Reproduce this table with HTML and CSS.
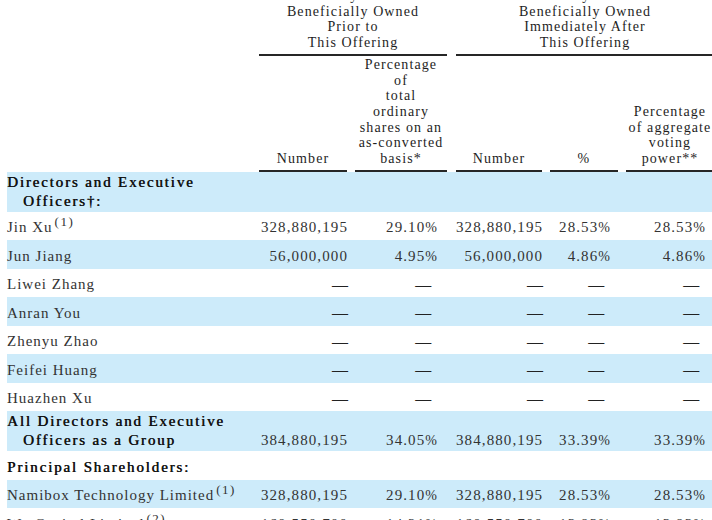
FILE: index.html
```html
<!DOCTYPE html>
<html lang="en">
<head>
<meta charset="utf-8">
<title>Beneficial Ownership</title>
<link rel="stylesheet" href="styles.css">
</head>
<body>
<div class="sheet">
  <div class="row grp">
    <div class="blank"></div>
    <div class="g1"><div class="hd">Ordinary Shares<br>Beneficially Owned<br>Prior to<br>This Offering</div></div>
    <div class="g2"><div class="hd">Ordinary Shares<br>Beneficially Owned<br>Immediately After<br>This Offering</div></div>
  </div>
  <div class="row sub">
    <div class="blank"></div>
    <div class="c c1"><div class="hd">Number</div></div>
    <div class="c c2"><div class="hd">Percentage<br>of<br>total<br>ordinary<br>shares on an<br>as-converted<br>basis*</div></div>
    <div class="c c3"><div class="hd">Number</div></div>
    <div class="c c4"><div class="hd">%</div></div>
    <div class="c c5"><div class="hd">Percentage<br>of aggregate<br>voting<br>power**</div></div>
  </div>

  <div class="row br tall blue">
    <div class="name hang strong">Directors and Executive<br>Officers†:</div>
  </div>
  <div class="row br">
    <div class="name">Jin Xu<sup class="fn">(1)</sup></div>
    <div class="num n1">328,880,195</div>
    <div class="pct p2">29.10<span class="pc">%</span></div>
    <div class="num n3">328,880,195</div>
    <div class="pct p4">28.53<span class="pc">%</span></div>
    <div class="pct p5">28.53<span class="pc">%</span></div>
  </div>
  <div class="row br blue">
    <div class="name">Jun Jiang</div>
    <div class="num n1">56,000,000</div>
    <div class="pct p2">4.95<span class="pc">%</span></div>
    <div class="num n3">56,000,000</div>
    <div class="pct p4">4.86<span class="pc">%</span></div>
    <div class="pct p5">4.86<span class="pc">%</span></div>
  </div>
  <div class="row br">
    <div class="name">Liwei Zhang</div>
    <div class="num n1"><span class="dash">—</span></div>
    <div class="pct p2"><span class="dash">—</span><span class="pc sp"></span></div>
    <div class="num n3"><span class="dash">—</span></div>
    <div class="pct p4"><span class="dash">—</span><span class="pc sp"></span></div>
    <div class="pct p5"><span class="dash">—</span><span class="pc sp"></span></div>
  </div>
  <div class="row br blue">
    <div class="name">Anran You</div>
    <div class="num n1"><span class="dash">—</span></div>
    <div class="pct p2"><span class="dash">—</span><span class="pc sp"></span></div>
    <div class="num n3"><span class="dash">—</span></div>
    <div class="pct p4"><span class="dash">—</span><span class="pc sp"></span></div>
    <div class="pct p5"><span class="dash">—</span><span class="pc sp"></span></div>
  </div>
  <div class="row br">
    <div class="name">Zhenyu Zhao</div>
    <div class="num n1"><span class="dash">—</span></div>
    <div class="pct p2"><span class="dash">—</span><span class="pc sp"></span></div>
    <div class="num n3"><span class="dash">—</span></div>
    <div class="pct p4"><span class="dash">—</span><span class="pc sp"></span></div>
    <div class="pct p5"><span class="dash">—</span><span class="pc sp"></span></div>
  </div>
  <div class="row br blue">
    <div class="name">Feifei Huang</div>
    <div class="num n1"><span class="dash">—</span></div>
    <div class="pct p2"><span class="dash">—</span><span class="pc sp"></span></div>
    <div class="num n3"><span class="dash">—</span></div>
    <div class="pct p4"><span class="dash">—</span><span class="pc sp"></span></div>
    <div class="pct p5"><span class="dash">—</span><span class="pc sp"></span></div>
  </div>
  <div class="row br">
    <div class="name">Huazhen Xu</div>
    <div class="num n1"><span class="dash">—</span></div>
    <div class="pct p2"><span class="dash">—</span><span class="pc sp"></span></div>
    <div class="num n3"><span class="dash">—</span></div>
    <div class="pct p4"><span class="dash">—</span><span class="pc sp"></span></div>
    <div class="pct p5"><span class="dash">—</span><span class="pc sp"></span></div>
  </div>
  <div class="row br tall blue">
    <div class="name hang strong">All Directors and Executive<br>Officers as a Group</div>
    <div class="num n1 lower">384,880,195</div>
    <div class="pct p2 lower">34.05<span class="pc">%</span></div>
    <div class="num n3 lower">384,880,195</div>
    <div class="pct p4 lower">33.39<span class="pc">%</span></div>
    <div class="pct p5 lower">33.39<span class="pc">%</span></div>
  </div>
  <div class="row br">
    <div class="name strong">Principal Shareholders:</div>
  </div>
  <div class="row br blue">
    <div class="name">Namibox Technology Limited<sup class="fn">(1)</sup></div>
    <div class="num n1">328,880,195</div>
    <div class="pct p2">29.10<span class="pc">%</span></div>
    <div class="num n3">328,880,195</div>
    <div class="pct p4">28.53<span class="pc">%</span></div>
    <div class="pct p5">28.53<span class="pc">%</span></div>
  </div>
  <div class="row br">
    <div class="name">Wu Capital Limited<sup class="fn">(2)</sup></div>
    <div class="num n1">160,550,700</div>
    <div class="pct p2">14.21<span class="pc">%</span></div>
    <div class="num n3">160,550,700</div>
    <div class="pct p4">13.93<span class="pc">%</span></div>
    <div class="pct p5">13.93<span class="pc">%</span></div>
  </div>
</div>
</body>
</html>
```

FILE: styles.css
```css
html, body {
  margin: 0;
  padding: 0;
  background: #ffffff;
}

body {
  width: 712px;
  height: 520px;
  overflow: hidden;
  font-family: "Liberation Serif", "Noto Sans CJK SC", serif;
  color: #262626;
}

.sheet {
  margin: -12px 0 0 7px;
  width: 715px;
}

.row {
  display: grid;
  grid-template-columns: 252px 96px 101px 94px 76px 96px;
}

/* ---------- header ---------- */
.grp,
.sub {
  font-size: 14px;
  letter-spacing: 1.1px;
  line-height: 15.7px;
  align-items: end;
  color: #1e1e1e;
}

.grp .g1 {
  grid-column: 2 / 4;
  padding-right: 9px;
}

.grp .g2 {
  grid-column: 4 / 7;
  padding-right: 8px;
}

.hd {
  text-align: center;
  white-space: nowrap;
  border-bottom: 2px solid #262626;
  padding-bottom: 3px;
}

.sub .c {
  padding-right: 8px;
}

.sub .c2 {
  padding-right: 9px;
}

.sub .c2 .hd {
  padding-top: 1px;
}

/* ---------- body rows ---------- */
.br {
  height: 28.5px;
  box-sizing: border-box;
  padding-top: 4px;
  align-items: center;
  font-size: 15px;
  letter-spacing: 1px;
  line-height: 19px;
  color: #333333;
}

.br.tall {
  height: 40px;
  padding-top: 0;
}

.blue {
  background: #cdebfa;
}

.name {
  white-space: nowrap;
}

.hang {
  padding-left: 16px;
  text-indent: -16px;
}

.name.strong {
  color: #111111;
  letter-spacing: 1.85px;
  text-shadow: 0.5px 0 0 #111111;
}

.num,
.pct {
  text-align: right;
  white-space: nowrap;
  letter-spacing: 1.1px;
}

.lower {
  align-self: end;
  padding-bottom: 1px;
}

.n1,
.n3 {
  padding-right: 7px;
}

.p2 {
  padding-right: 20.7px;
}

.p4 {
  padding-right: 17.7px;
}

.p5 {
  padding-right: 18.7px;
}

.pc {
  display: inline-block;
  width: 10px;
  text-align: left;
  font-size: 14px;
  letter-spacing: 0;
}

.pc.sp {
  width: 4px;
}

.dash {
  font-size: 16px;
  letter-spacing: 0;
  color: #222222;
}

.fn {
  font-size: 13px;
  letter-spacing: 1.5px;
  line-height: 0;
  vertical-align: 6px;
  margin-left: 2px;
}
```
